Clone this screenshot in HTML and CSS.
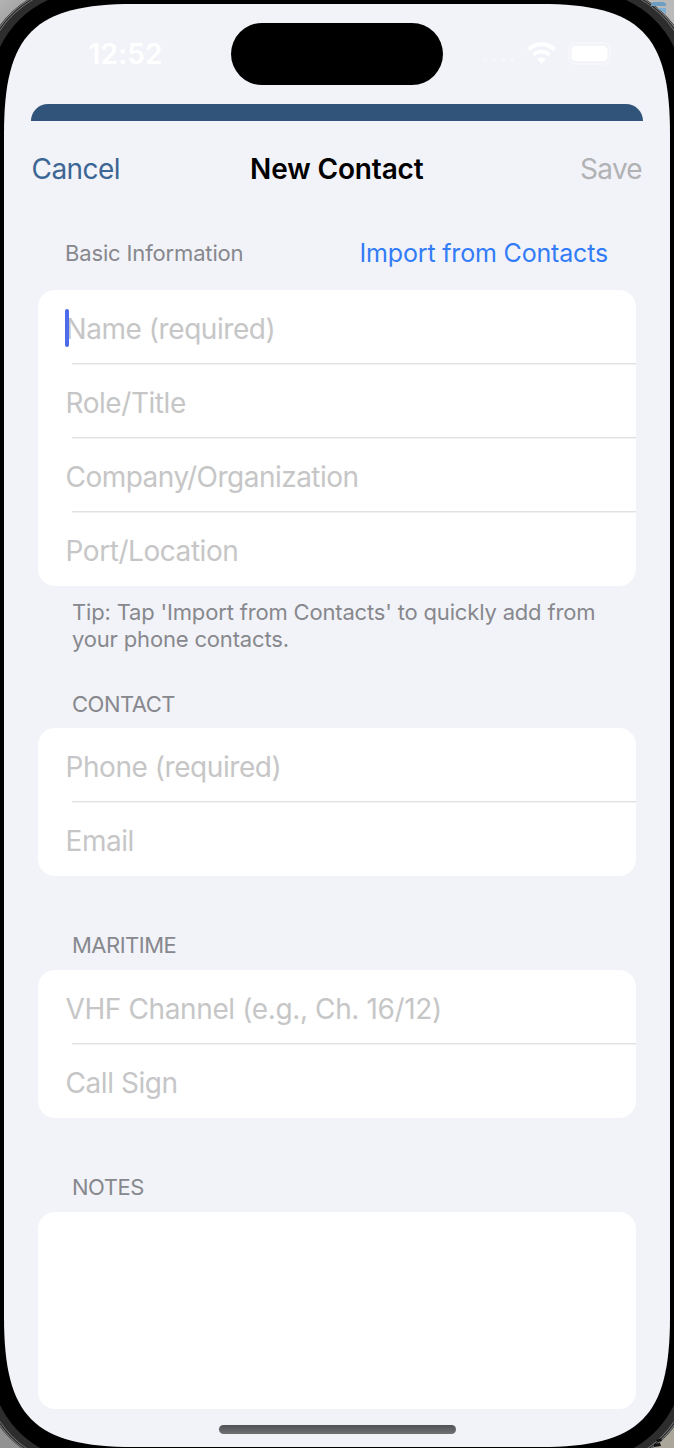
FILE: index.html
```html
<!DOCTYPE html>
<html lang="en">
<head>
<meta charset="utf-8">
<title>New Contact</title>
<link rel="stylesheet" href="styles.css">
</head>
<body>
<div class="phone">
  <svg class="frame" width="674" height="1448" viewBox="0 0 674 1448" aria-hidden="true">
    <defs>
      <linearGradient id="desk" x1="0" y1="0" x2="1" y2="1"><stop offset="0" stop-color="#b4b4b4"/><stop offset="1" stop-color="#969696"/></linearGradient>
      <g id="rim">
        <path d="M0 0H48A101 101 0 0 0 0 47Z" fill="#2d2d2d"/>
        <path d="M0 0H33A101 101 0 0 0 0 31Z" fill="#777"/>
        <path d="M0 0H31.500A101 101 0 0 0 0 29.500Z" fill="#252525"/>
        <path d="M0 0H29.500A101 101 0 0 0 0 27.500Z" fill="#858585"/>
        <path d="M0 0H28A101 101 0 0 0 0 26Z" fill="#333"/>
      </g>
      <path id="corner" d="M0 0H27A101 101 0 0 0 0 25Z"/>
    </defs>
    <rect width="674" height="1448" fill="#000"/>
    <use href="#rim"/><use href="#corner" fill="url(#desk)"/>
    <g transform="matrix(-1 0 0 1 674 0)"><use href="#rim"/><use href="#corner" fill="#b9b9b9"/><path d="M10 2h11l2 2v2H8V4z" fill="#6c9fc2"/><path d="M8 8h9l-9 6z" fill="#7baed0"/></g>
    <g transform="matrix(1 0 0 -1 0 1452)"><use href="#rim"/><use href="#corner" fill="#929292"/></g>
    <g transform="matrix(-1 0 0 -1 674 1452)"><use href="#rim"/><use href="#corner" fill="#aaa69a"/><path d="M12 11l5-1 1 2-5 2zM13 6l7-1v3l-6 1z" fill="#111"/></g>
    <path d="M4 134C4 34 34 4 134 4H540C640 4 670 34 670 134V1317C670 1417 640 1447 540 1447H134C34 1447 4 1417 4 1317Z" fill="#f2f3f8"/>
  </svg>
  <main class="screen">
    <div class="status">
      <span class="time">12:52</span>
      <div class="island"></div>
      <svg class="indicators" width="136" height="26" viewBox="0 0 136 26" fill="#fff">
        <g opacity=".28"><circle cx="5" cy="20.500" r="2.300"/><circle cx="14" cy="20.500" r="2.300"/><circle cx="23" cy="20.500" r="2.300"/><circle cx="32" cy="20.500" r="2.300"/></g>
        <g fill="none" stroke="#fff"><path d="M48.500 9.500A18.500 18.500 0 0 1 74.500 9.500" stroke-width="4"/><path d="M53.500 14.800A11.500 11.500 0 0 1 69.500 14.800" stroke-width="3.400"/></g>
        <path d="M57 19Q61.500 16 66 19L61.500 23.800Z"/>
        <rect x="89" y="3" width="41" height="21" rx="7" fill="none" stroke="#fff" stroke-width="1.500" opacity=".45"/>
        <rect x="91.500" y="5.800" width="36" height="15.400" rx="4.500"/>
        <path d="M132.500 11Q135 13.500 132.500 16Z" opacity=".45"/>
      </svg>
    </div>
    <div class="behind"></div>
    <header class="nav"><span class="cancel">Cancel</span><h1 class="title">New Contact</h1><span class="save">Save</span></header>
    <div class="basic"><span class="basic-label">Basic Information</span><span class="import">Import from Contacts</span></div>
    <section class="card">
      <div class="row"><i class="caret"></i><span>Name (required)</span></div>
      <div class="row"><span>Role/Title</span></div>
      <div class="row"><span class="company">Company/Organization</span></div>
      <div class="row"><span>Port/Location</span></div>
    </section>
    <p class="tip">Tip: Tap 'Import from Contacts' to quickly add from<br>your phone contacts.</p>
    <h2 class="heading first">CONTACT</h2>
    <section class="card">
      <div class="row"><span>Phone (required)</span></div>
      <div class="row"><span>Email</span></div>
    </section>
    <h2 class="heading">MARITIME</h2>
    <section class="card">
      <div class="row"><span class="vhf">VHF Channel (e.g., Ch. 16/12)</span></div>
      <div class="row"><span>Call Sign</span></div>
    </section>
    <h2 class="heading">NOTES</h2>
    <section class="card notes"></section>
    <div class="home"></div>
  </main>
</div>
</body>
</html>
```
FILE: styles.css
```css
* { box-sizing: border-box; }
body { margin: 0; background: #000; font-family: Inter, "Liberation Sans", sans-serif; }
.phone { position: relative; width: 674px; height: 1448px; overflow: hidden; }
.frame { position: absolute; inset: 0; display: block; }
.screen { position: relative; height: 1448px; padding-top: 23px; display: flex; flex-direction: column; white-space: nowrap; }
.status { display: grid; grid-template-columns: 231px 212px 231px; height: 81px; flex: none; }
.time { padding-left: 88.5px; font-size: 28px; font-weight: 600; line-height: 62px; color: #fff; letter-spacing: .2px; }
.island { height: 62px; border-radius: 31px; background: #000; }
.indicators { margin: 17px 0 0 37px; }
.behind { height: 17px; margin: 0 31px; border-radius: 18px 18px 0 0; background: #30547a; flex: none; }
.nav { height: 96px; padding: 0 32px 0 31.5px; display: grid; grid-template-columns: 1fr auto 1fr; align-items: center; font-size: 28px; flex: none; }
.cancel { color: #3c6693; letter-spacing: -.55px; }
.title { margin: 0; font-size: 28px; font-weight: 600; letter-spacing: -.15px; }
.save { color: #b1b2b5; text-align: right; letter-spacing: -.7px; }
.basic { height: 73px; padding: 0 66px 1px 65px; display: flex; justify-content: space-between; align-items: center; flex: none; }
.basic-label { font-size: 22px; color: #87888d; letter-spacing: -.15px; }
.import { font-size: 25px; color: #327cf7; letter-spacing: -.17px; }
.card { margin: 0 38px; background: #fff; border-radius: 17px; flex: none; }
.row { position: relative; height: 74px; padding: 3px 0 0 27.5px; display: flex; align-items: center; font-size: 28px; line-height: 34px; color: #c6c6c7; letter-spacing: -.44px; }
.row + .row::before { content: ""; position: absolute; left: 34px; right: 0; top: -1px; height: 2px; background: linear-gradient(#e1e1e3 50%, #f2f2f3 50%); }
.company { letter-spacing: -.52px; }
.vhf { letter-spacing: -.38px; }
.caret { position: absolute; left: 27px; top: 18.5px; width: 3.5px; height: 38px; border-radius: 2px; background: #4d6bea; }
.tip { margin: 13px 72px 0; font-size: 22px; line-height: 27px; color: #87888d; letter-spacing: -.17px; }
.heading { height: 94px; margin: 0; padding: 56px 72px 0; font-size: 22px; font-weight: 400; line-height: 27px; color: #87888d; letter-spacing: -.5px; flex: none; }
.heading.first { height: 75px; padding-top: 37.5px; }
.notes { height: 196.5px; }
.home { width: 237px; height: 9px; margin: 16px auto 0; border-radius: 5px; background: linear-gradient(#505255, #707173); }
```
